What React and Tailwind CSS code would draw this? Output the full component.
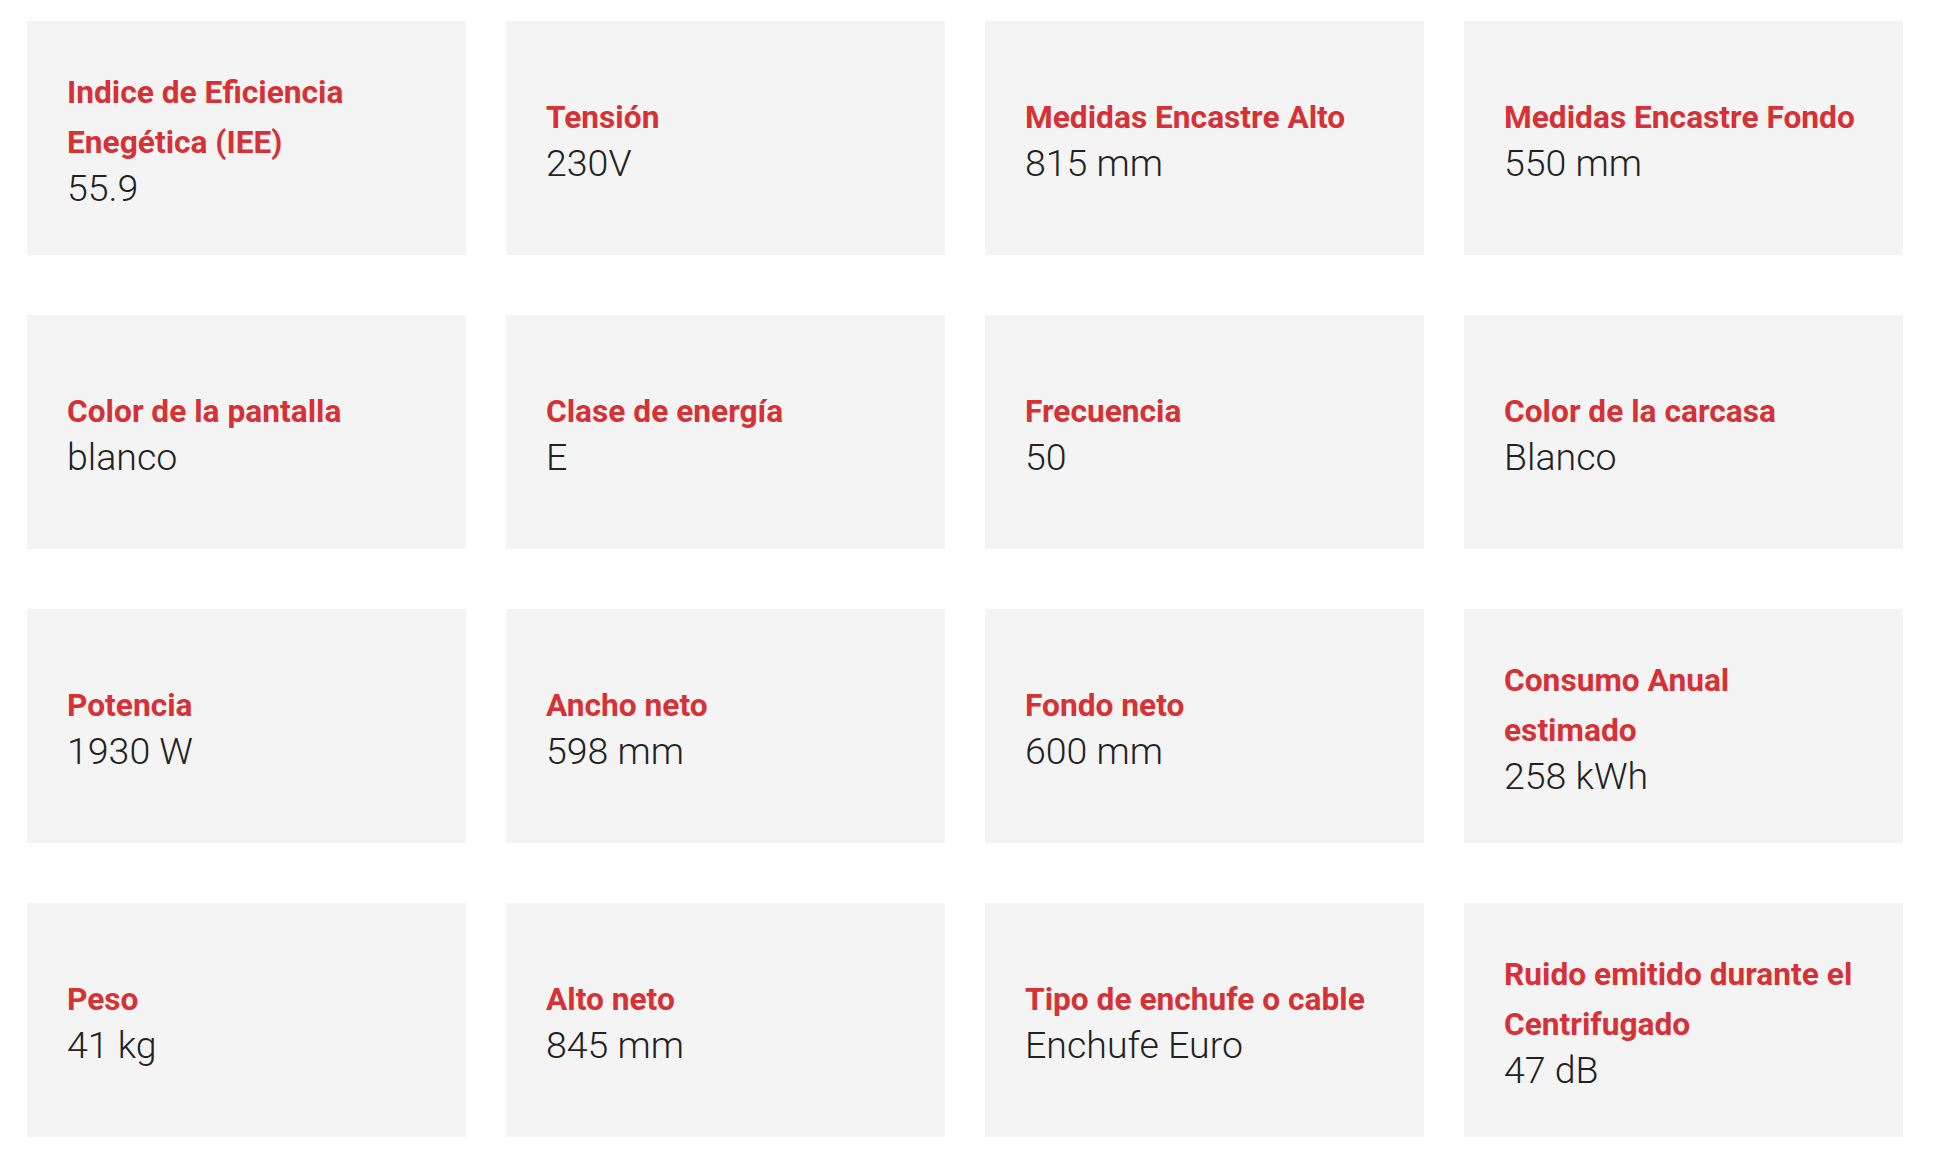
import React from "react";

const items = [
  ["Indice de Eficiencia Enegética (IEE)", "55.9"],
  ["Tensión", "230V"],
  ["Medidas Encastre Alto", "815 mm"],
  ["Medidas Encastre Fondo", "550 mm"],
  ["Color de la pantalla", "blanco"],
  ["Clase de energía", "E"],
  ["Frecuencia", "50"],
  ["Color de la carcasa", "Blanco"],
  ["Potencia", "1930 W"],
  ["Ancho neto", "598 mm"],
  ["Fondo neto", "600 mm"],
  ["Consumo Anual estimado", "258 kWh"],
  ["Peso", "41 kg"],
  ["Alto neto", "845 mm"],
  ["Tipo de enchufe o cable", "Enchufe Euro"],
  ["Ruido emitido durante el Centrifugado", "47 dB"],
];

export default function App() {
  return (
    <div className="min-h-[1168px] bg-white pl-[27px] pt-[21px] font-['Roboto',sans-serif]">
      <div className="grid w-[1876px] grid-cols-4 gap-x-[40px] gap-y-[60px]">
        {items.map(([label, value]) => (
          <div
            key={label}
            className="flex h-[234px] flex-col justify-center bg-[#f4f4f4] pl-10 pr-[44px]"
          >
            <div className="text-[31.7px] font-bold leading-[50px] text-[#d63236]">
              {label}
            </div>
            <div className="text-[37.5px] font-light leading-[40px] text-[#222222]">
              {value}
            </div>
          </div>
        ))}
      </div>
    </div>
  );
}
